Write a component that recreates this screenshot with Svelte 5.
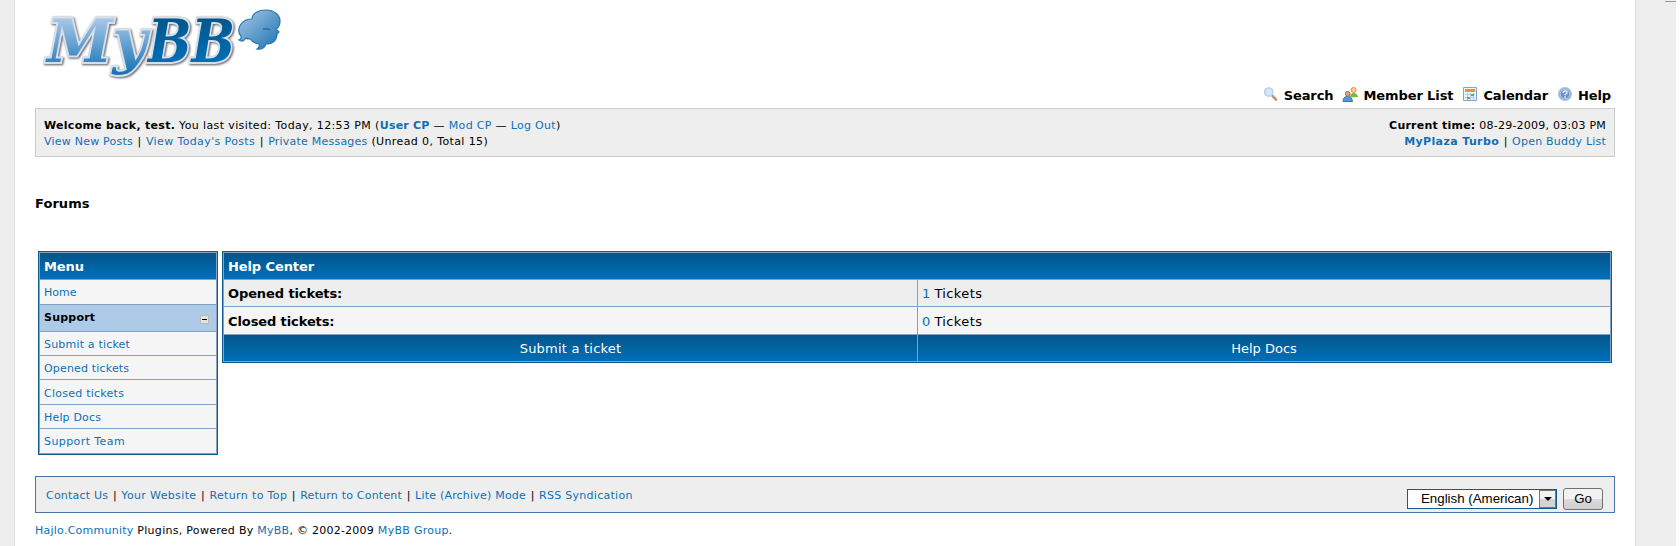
<script>
  const menu = [
    { label: 'Submit a ticket', track: 0.19, height: 23 },
    { label: 'Opened tickets', track: 0.17, height: 23 },
    { label: 'Closed tickets', track: 0.25, height: 24, low: true },
    { label: 'Help Docs', track: 0.17, height: 23 },
    { label: 'Support Team', track: 0.42, height: 24 }
  ];
  const footer = [
    { label: 'Contact Us', track: 0.22 },
    { label: 'Your Website', track: 0.36 },
    { label: 'Return to Top', track: 0.36 },
    { label: 'Return to Content', track: 0.21 },
    { label: 'Lite (Archive) Mode', track: 0.21 },
    { label: 'RSS Syndication', track: 0.28 }
  ];
</script>

<div class="page">
  <header>
    <svg class="logo" width="260" height="84" viewBox="0 0 260 84">
      <defs>
        <linearGradient id="light" x1="0" y1="18" x2="0" y2="76" gradientUnits="userSpaceOnUse"><stop offset="0" stop-color="#a9c8e6" /><stop offset="1" stop-color="#0f70b6" /></linearGradient>
        <linearGradient id="dark" x1="0" y1="18" x2="0" y2="63" gradientUnits="userSpaceOnUse"><stop offset="0" stop-color="#03568b" /><stop offset="1" stop-color="#006fb8" /></linearGradient>
        <linearGradient id="cloud" x1="0" y1="0" x2="1" y2="1"><stop offset="0" stop-color="#a8cbe8" /><stop offset="1" stop-color="#1a70b0" /></linearGradient>
      </defs>
      <g class="letters">
        <text x="12" y="61.500" textLength="100" lengthAdjust="spacingAndGlyphs" fill="url(#light)">My</text>
        <text x="113" y="61.500" textLength="87" lengthAdjust="spacingAndGlyphs" fill="url(#dark)">BB</text>
      </g>
      <g transform="translate(-4 0)">
        <path d="M221 19C221 13 228 10 235 10C243 10 249 15 249 21C249 25 247 28 245 29L248 32L246 34C246 40 242 44 235 44C234 47 231 50 226 49Q229 47 228 44Q222 43 219 39Q216 39 215 38C213 41 211 42 208 40Q211 39 210 36C207 33 207 28 210 24C213 20 217 19 221 19Z" fill="url(#cloud)" stroke="#2777b1" stroke-width="1.2" />
        <path d="M232 29h5l2 1" fill="none" stroke="#1a6fac" stroke-width="1.3" />
      </g>
    </svg>
    <nav>
      <a href="#search"><svg width="16" height="16" viewBox="0 0 16 16"><path d="M9.500 9l3.500 3.500" stroke="#c09a70" stroke-width="2.600" stroke-linecap="round" /><circle cx="5.700" cy="5" r="4.200" fill="#d4e8fb" stroke="#b3cdea" stroke-width="1.300" /></svg><b>Search</b></a>
      <a href="#members"><svg width="16" height="16" viewBox="0 0 16 16"><path d="M8 10.500q0-4.500 3.500-4.500t4.500 4z" fill="#6fb84e" /><circle cx="11.700" cy="3" r="2.500" fill="#f5cf88" stroke="#d99a3c" /><path d="M1 14.500q0-5 4.500-5t5 5z" fill="#5b94dc" stroke="#3d6fbb" /><circle cx="5.700" cy="6.800" r="2.300" fill="#e0a878" stroke="#a86638" /></svg><b>Member List</b></a>
      <a href="#calendar"><svg width="16" height="16" viewBox="0 0 16 16"><path d="M1.500 .5h13v13h-13z" fill="#eef4fb" stroke="#7fa6d0" /><path d="M3 2h10v3H3z" fill="#f58a4b" /><path d="M3 7.500h10M3 10.500h10M5.500 6v7M8.500 6v7M11.500 6v7" stroke="#c3cbd5" /><path d="M9 7h3v2H9zM5 10h3v2H5z" fill="#65ab55" /></svg><b>Calendar</b></a>
      <a href="#help"><svg width="16" height="16" viewBox="0 0 16 16"><circle cx="8" cy="7" r="6.400" fill="#6a93cc" stroke="#b5c7e2" stroke-width="1.400" /><circle cx="8" cy="7" r="4.900" fill="none" stroke="#dbe6f4" stroke-width=".7" /><path d="M6.200 5.700q0-1.900 1.900-1.900t1.900 1.700q0 1-1.200 1.500-.8.400-.8 1.300M8 9.300v1.400" fill="none" stroke="#fff" stroke-width="1.300" /></svg><b>Help</b></a>
    </nav>
  </header>

  <section class="panel">
    <div>
      <b class="w3">Welcome back, test.</b> <span class="w4">You last visited: Today, 12:53 PM</span> (<a href="#usercp"><b class="w2">User CP</b></a> — <a href="#modcp" class="w3">Mod CP</a> — <a href="#logout" class="w3">Log Out</a>)<br />
      <a href="#new" class="w2">View New Posts</a><span class="bar">|</span><a href="#today" class="w4">View Today's Posts</a><span class="bar">|</span><a href="#pm" class="w2">Private Messages</a> <span class="w4">(Unread 0, Total 15)</span>
    </div>
    <div class="right">
      <b class="w2">Current time:</b> <span class="w2">08-29-2009, 03:03 PM</span><br />
      <a href="#turbo"><b class="w4">MyPlaza Turbo</b></a><span class="bar">|</span><a href="#buddy" class="w2">Open Buddy List</a>
    </div>
  </section>

  <h1>Forums</h1>

  <main>
    <div class="box menu">
      <div class="head">Menu</div>
      <div class="item home"><a href="#home">Home</a></div>
      <div class="support"><b class="w2">Support</b><span class="toggle"></span></div>
      {#each menu as m}
        <div class="item" class:low={m.low} style:height="{m.height}px"><a href="#{m.label}" style:letter-spacing="{m.track}px">{m.label}</a></div>
      {/each}
    </div>
    <div class="box center">
      <div class="head wide">Help Center</div>
      <div class="cell one"><b>Opened tickets:</b></div>
      <div class="cell one"><span><a href="#opened">1</a> <span class="w4">Tickets</span></span></div>
      <div class="cell two"><b>Closed tickets:</b></div>
      <div class="cell two"><span><a href="#closed">0</a> <span class="w4">Tickets</span></span></div>
      <div class="foot w2">Submit a ticket</div>
      <div class="foot">Help Docs</div>
    </div>
  </main>

  <footer>
    <div class="links">
      {#each footer as f, n}
        {#if n}<span class="bar">|</span>{/if}
        <a href="#{f.label}" style:letter-spacing="{f.track}px">{f.label}</a>
      {/each}
    </div>
    <div class="language">
      <div class="select"><span>English (American)</span><span class="arrow"></span></div>
      <button>Go</button>
    </div>
  </footer>
  <p class="copy"><a href="#hajlo">Hajlo.Community</a> <span class="w3">Plugins, Powered By</span> <a href="#mybb">MyBB</a><span>, © 2002-2009</span> <a href="#group" class="w3">MyBB Group</a>.</p>
</div>

<style>
  :global(body) { margin: 0; background: linear-gradient(90deg, #eee 1676px, #fff 1676px); }
  :global(#app) { display: flow-root; background: linear-gradient(#999, #999) 1665px 1px / 11px 1px no-repeat; }
  .page { box-sizing: border-box; width: 1622px; height: 546px; margin-left: 14px; padding: 0 20px; overflow: hidden; background: #fff; border: solid #e2e2e2; border-width: 0 1px; font: 11px/16px "DejaVu Sans", Verdana, sans-serif; color: #000; }
  a { color: #0f70b6; text-decoration: none; }
  .w2 { letter-spacing: .22px; }
  .w3 { letter-spacing: .29px; }
  .w4 { letter-spacing: .38px; }
  header { display: flex; height: 108px; justify-content: space-between; align-items: flex-start; }
  .logo { flex: none; }
  .letters { font: italic bold 60px "DejaVu Serif", serif; paint-order: stroke; stroke: #d8dfe7; stroke-width: 4px; filter: drop-shadow(1px 1px 1px #556); }
  nav { display: flex; gap: 9px; font-size: 13px; padding: 87px 4px 0 0; letter-spacing: -.1px; }
  nav a { color: #000; display: flex; gap: 5px; line-height: 17px; }
  nav b { padding-top: 1px; line-height: 16px; }
  .panel { box-sizing: border-box; height: 49px; display: flex; justify-content: space-between; border: 1px solid #ccc; padding: 9px 8px 0; background: #eee; letter-spacing: .4px; }
  .right { text-align: right; }
  h1 { margin: 38px 0 0; font-size: 13px; line-height: 18px; height: 56px; letter-spacing: .05px; }
  main { display: flex; gap: 4px; padding: 0 3px; align-items: flex-start; height: 225px; }
  .box { box-sizing: border-box; border: 1px solid #0f5c8e; padding: 1px; background: #81a2c4; display: grid; row-gap: 1px; }
  .menu { width: 180px; }
  .center { flex: 1; grid-template-columns: 693px 1fr; column-gap: 1px; font-size: 13px; }
  .head, .foot { background: linear-gradient(#03568b, #006fb8); color: #fff; }
  .head { box-sizing: border-box; height: 26px; padding: 6px 4px 0; font-size: 13px; font-weight: bold; letter-spacing: -.1px; }
  .wide { grid-column: span 2; }
  .item { box-sizing: border-box; padding: 5px 4px 0; background: #f5f5f5; }
  .low { padding-top: 6px; }
  .home { height: 24px; }
  .support { box-sizing: border-box; height: 26px; padding: 5px 7px 0 4px; background: #adcbe7; display: flex; justify-content: space-between; }
  .toggle { box-sizing: border-box; width: 9px; height: 9px; margin-top: 5px; border: 1px solid #b9b9b9; background: linear-gradient(#000, #000) center / 5px 1px no-repeat, #e6e3de; }
  .cell { box-sizing: border-box; padding: 6px 4px 0; }
  .cell b { letter-spacing: -.1px; }
  .one { height: 26px; background: #eee; }
  .two { height: 27px; padding-top: 7px; background: #f5f5f5; }
  .foot { box-sizing: border-box; height: 26px; padding-top: 6px; text-align: center; }
  footer { box-sizing: border-box; height: 37px; display: flex; justify-content: space-between; border: 1px solid #4874a5; background: #eee; padding: 0 11px 0 10px; }
  .links { display: flex; padding-top: 11px; white-space: nowrap; }
  .bar { display: inline-block; width: 13px; text-align: center; letter-spacing: 0; }
  .language { display: flex; gap: 6px; align-items: flex-start; padding-top: 12px; font: 13.3px/18px "Liberation Sans", Arial, sans-serif; }
  .select { box-sizing: border-box; width: 150px; height: 20px; display: flex; justify-content: space-between; border: 1px solid #0f5c8e; background: #fff; padding-left: 13px; white-space: nowrap; }
  .arrow { box-sizing: border-box; width: 17px; height: 18px; border: 1px solid #777; background: linear-gradient(#f2f2f2 50%, #d4d4d4 50%); display: flex; align-items: center; justify-content: center; }
  .arrow::before { content: ""; border: 4px solid transparent; border-top-color: #000; border-bottom: 0; }
  button { box-sizing: border-box; width: 40px; height: 22px; margin: -1px 0 0; padding: 0; border: 1px solid #707070; border-radius: 3px; background: linear-gradient(#f2f2f2 50%, #dbdbdb 50%, #cfcfcf); font: inherit; color: #000; }
  .copy { margin: 10px 0 0; letter-spacing: .25px; }
</style>
